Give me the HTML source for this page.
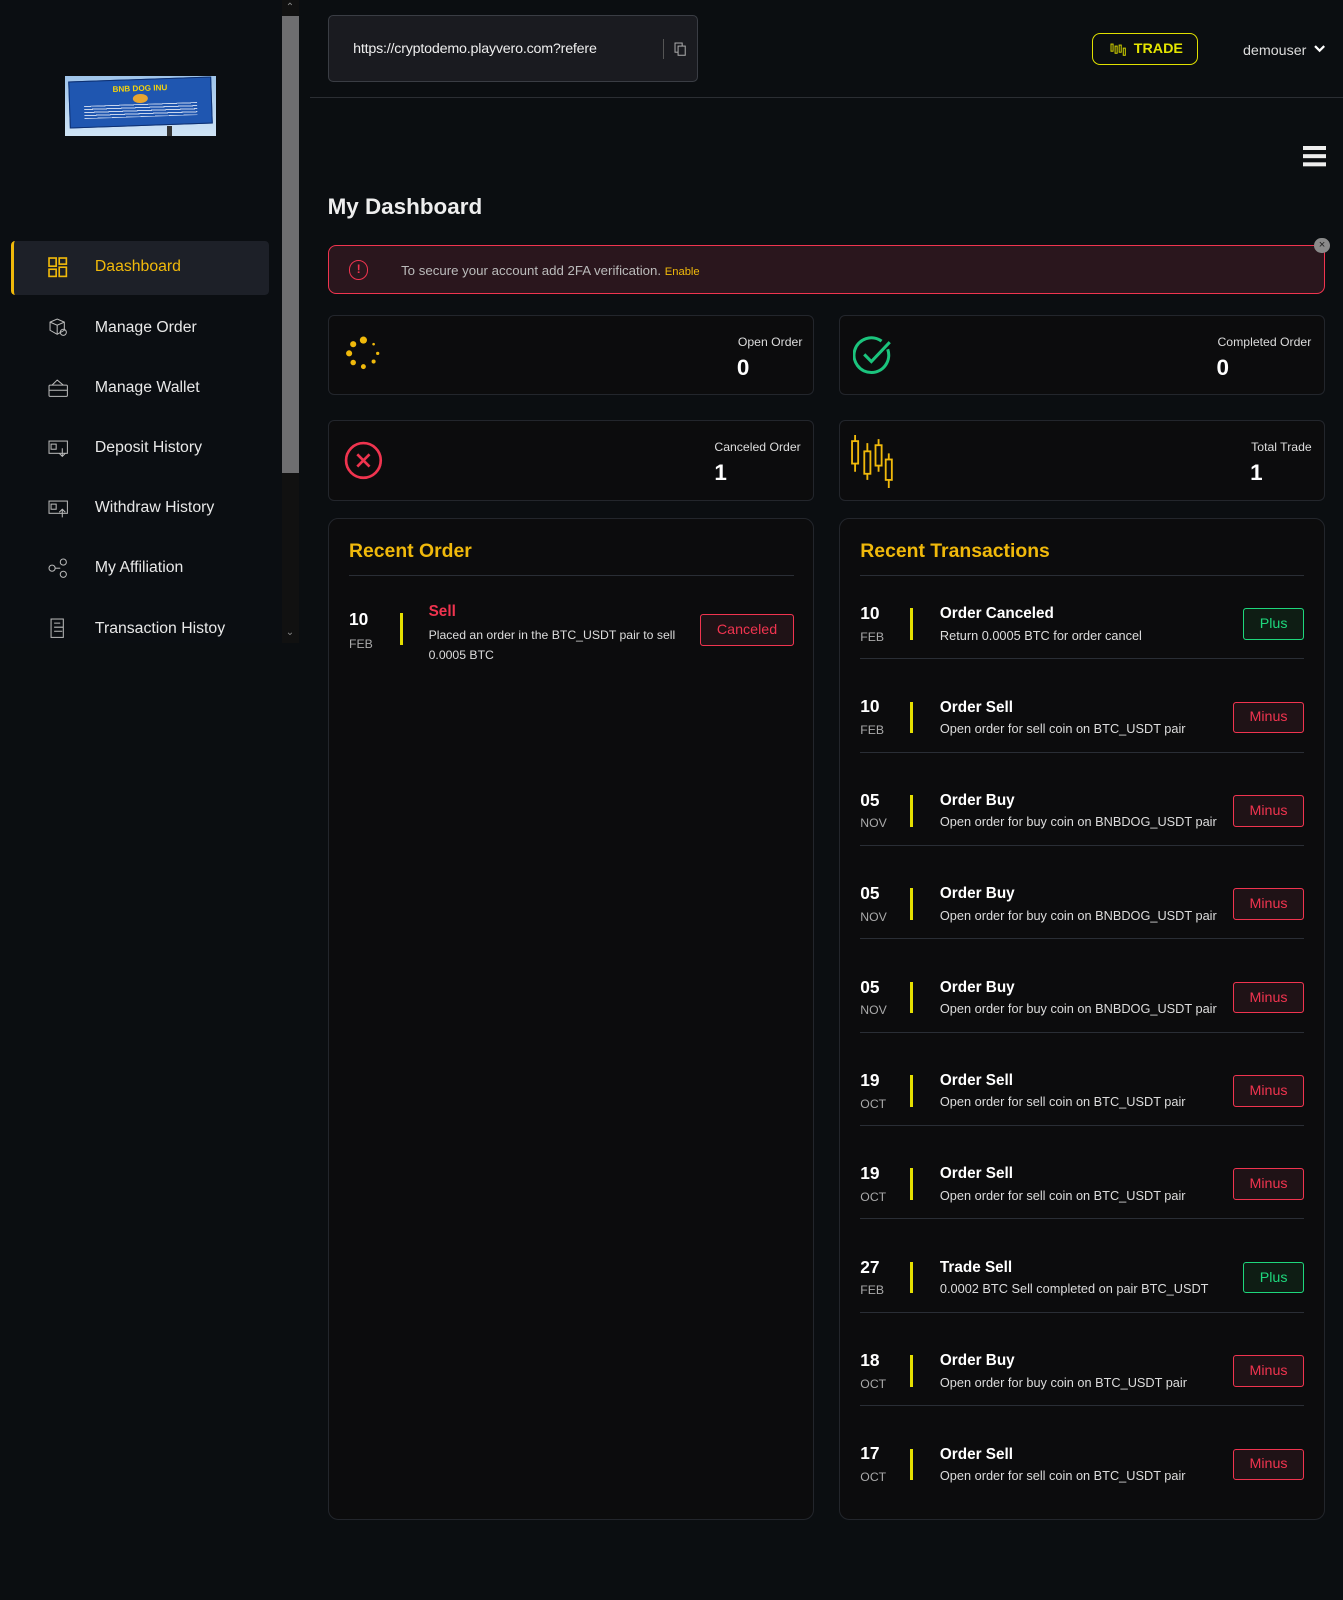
<!DOCTYPE html>
<html><head><meta charset="utf-8"><style>
*{margin:0;padding:0;box-sizing:border-box}
html,body{width:1343px;height:1600px;overflow:hidden;background:#0b0e11}
#r{zoom:1.02052;width:1316px;height:1568px;position:relative;font-family:"Liberation Sans",sans-serif;color:#fff;background:#0b0e11}
.a{position:absolute}
.side{left:0;top:0;width:276px;height:630px;background:#0b0e12}
.menu{left:47px;font-size:15.5px;color:#e8e8e8;display:flex;align-items:center}
.menu svg{width:20px;height:20px;margin-right:26px}
.card{background:#0c0c0d;border:1px solid #23262c;border-radius:6px}
.lbl{font-size:12px;color:#ddd}
.num{font-size:22px;font-weight:bold}
.date{font-size:17px;font-weight:bold}
.mon{font-size:12px;color:#aaa}
.bar{width:3px;background:#e5df00}
.tt{font-size:15px;font-weight:bold}
.ds{font-size:12.5px;color:#ddd}
.btn{font-size:14px;border-radius:3px;display:flex;align-items:center;justify-content:center}
.minus{border:1px solid #f0344f;color:#f0344f;background:#1f1216}
.plus{border:1px solid #1ed77c;color:#1ed77c;background:#0e1d14}
.hr{height:1px;background:#2a2e35}
</style></head><body><div id="r">
<div class="a side"></div>
<div class="a" style="left:276px;top:0;width:17px;height:630px;background:#111"></div>
<div class="a" style="left:276px;top:16px;width:17px;height:447px;background:#6e6e70"></div>
<div class="a" style="left:280px;top:2px;font-size:10px;color:#888">&#8963;</div>
<div class="a" style="left:280px;top:614px;font-size:10px;color:#888">&#8964;</div>
<!-- logo -->
<div class="a" style="left:64px;top:74px;width:148px;height:59px;background:linear-gradient(#9fc4ea,#cfe3f5);overflow:hidden">
 <div class="a" style="left:4px;top:3px;width:140px;height:46px;background:#1f56b0;transform:rotate(-2deg);font-size:8px;color:#f4d20c;font-weight:bold;text-align:center;padding-top:4px;border:1px solid #0d2f70">BNB DOG INU<div style="width:14px;height:9px;border-radius:50%;background:#e8a530;margin:1px auto"></div><div style="width:110px;height:12px;margin:1px auto;background:repeating-linear-gradient(#c8d6ee 0 1px,transparent 1px 3px)"></div></div>
 <div class="a" style="left:100px;top:49px;width:5px;height:11px;background:#333"></div>
</div>
<!-- active menu -->
<div class="a" style="left:11px;top:236px;width:253px;height:53px;background:#1d2028;border-left:3px solid #f0b90b;border-radius:4px"></div>
<div class="a menu" style="top:252px;color:#f0b90b"><svg viewBox="0 0 20 20" fill="none" stroke="#f0b90b" stroke-width="1.6"><rect x="1" y="1" width="7" height="8"/><rect x="1" y="12" width="7" height="7"/><rect x="11" y="1" width="7" height="6"/><rect x="11" y="10" width="7" height="9"/></svg>Daashboard</div>
<div class="a menu" style="top:311px"><svg viewBox="0 0 20 20" fill="none" stroke="#bbb" stroke-width="1"><path d="M2 5l7-3 7 3v8l-7 4-7-4z M2 5l7 3 7-3 M9 8v9"/><circle cx="15" cy="15" r="3"/></svg>Manage Order</div>
<div class="a menu" style="top:370px"><svg viewBox="0 0 20 20" fill="none" stroke="#bbb" stroke-width="1"><rect x="1" y="7" width="18" height="11" rx="1"/><path d="M4 7l5-5 6 5M1 12h18"/></svg>Manage Wallet</div>
<div class="a menu" style="top:429px"><svg viewBox="0 0 20 20" fill="none" stroke="#bbb" stroke-width="1"><rect x="1" y="3" width="18" height="12"/><rect x="3" y="6" width="5" height="5"/><path d="M14 10v8M11 15l3 3 3-3"/></svg>Deposit History</div>
<div class="a menu" style="top:488px"><svg viewBox="0 0 20 20" fill="none" stroke="#bbb" stroke-width="1"><rect x="1" y="3" width="18" height="12"/><rect x="3" y="6" width="5" height="5"/><path d="M14 19v-8M11 14l3-3 3 3"/></svg>Withdraw History</div>
<div class="a menu" style="top:547px"><svg viewBox="0 0 20 20" fill="none" stroke="#bbb" stroke-width="1"><circle cx="4" cy="10" r="3"/><circle cx="15" cy="4" r="3"/><circle cx="15" cy="16" r="3"/><path d="M7 10h5"/></svg>My Affiliation</div>
<div class="a menu" style="top:606px"><svg viewBox="0 0 20 20" fill="none" stroke="#bbb" stroke-width="1"><rect x="3" y="1" width="12" height="18"/><path d="M6 5h6M6 9h9M6 13h8"/></svg>Transaction Histoy</div>

<!-- header -->
<div class="a" style="left:321px;top:15px;width:363px;height:65px;background:#1a1b20;border:1px solid #3a3d44;border-radius:5px"></div>
<div class="a" style="left:346px;top:40px;font-size:14px;color:#eee;letter-spacing:-0.2px">https://cryptodemo.playvero.com?refere</div>
<div class="a" style="left:650px;top:38px;width:1px;height:20px;background:#555"></div>
<svg class="a" style="left:660px;top:41px" width="13" height="14" viewBox="0 0 13 14" fill="none" stroke="#aaa" stroke-width="1"><rect x="1" y="1" width="7" height="9"/><rect x="4" y="4" width="7" height="9" fill="#1a1b20"/></svg>
<div class="a" style="left:304px;top:95px;width:1012px;height:1px;background:#2b2e33"></div>
<div class="a" style="left:1070px;top:32px;width:104px;height:32px;border:1px solid #e0e000;border-radius:8px;color:#e5e500;font-weight:bold;font-size:14px;display:flex;align-items:center;padding-left:40px">TRADE</div>
<svg class="a" style="left:1088px;top:40px" width="16" height="16" viewBox="0 0 16 16" fill="none" stroke="#d0d000" stroke-width="1"><rect x="1" y="3" width="2" height="7"/><rect x="5" y="5" width="2" height="7"/><rect x="9" y="4" width="2" height="7"/><rect x="13" y="7" width="2" height="7"/></svg>
<div class="a" style="left:1218px;top:42px;font-size:14px;color:#ddd">demouser</div>
<svg class="a" style="left:1288px;top:44px" width="11" height="8" viewBox="0 0 11 8" fill="none" stroke="#fff" stroke-width="2.2"><path d="M1 1l4.5 4.5L10 1"/></svg>
<div class="a" style="left:1277px;top:143px;width:22px;height:4px;background:#eee;box-shadow:0 8px 0 #eee,0 16px 0 #eee"></div>
<div class="a" style="left:321px;top:190px;font-size:22px;font-weight:bold;color:#eee">My Dashboard</div>

<!-- alert -->
<div class="a" style="left:321px;top:240px;width:977px;height:48px;background:#2a161d;border:1px solid #f0344f;border-radius:8px"></div>
<div class="a" style="left:342px;top:255px;width:19px;height:19px;border:1.5px solid #f0344f;border-radius:50%;color:#f0344f;font-size:12px;font-weight:bold;text-align:center;line-height:16px">!</div>
<div class="a" style="left:393px;top:258px;font-size:13px;color:#bbb">To secure your account add 2FA verification. <span style="color:#f0b90b;font-size:11px">Enable</span></div>
<div class="a" style="left:1288px;top:233px;width:15px;height:15px;border-radius:50%;background:#8a8a8a;color:#222;font-size:11px;text-align:center;line-height:15px">×</div>

<!-- stat cards -->
<div class="a card" style="left:321px;top:309px;width:477px;height:78px"></div>
<div class="a card" style="left:822px;top:309px;width:476px;height:78px"></div>
<div class="a card" style="left:321px;top:412px;width:477px;height:79px"></div>
<div class="a card" style="left:822px;top:412px;width:476px;height:79px"></div>
<svg class="a" style="left:336px;top:328px" width="40" height="40" viewBox="0 0 40 40" fill="#f0b90b"><circle cx="20" cy="5" r="3.5"/><circle cx="10" cy="9" r="3"/><circle cx="6" cy="18" r="3"/><circle cx="10" cy="27" r="2.7"/><circle cx="20" cy="31" r="2.4"/><circle cx="30" cy="26" r="2"/><circle cx="34" cy="18" r="1.6"/><circle cx="30" cy="9" r="1.3"/></svg>
<div class="a lbl" style="left:723px;top:328px">Open Order</div><div class="a num" style="left:722px;top:348px">0</div>
<svg class="a" style="left:836px;top:328px" width="40" height="40" viewBox="0 0 40 40" fill="none" stroke="#1bc47d" stroke-width="3"><path d="M34 14A17 17 0 1 1 28 6"/><path d="M11 19l7 7 18-19"/></svg>
<div class="a lbl" style="left:1193px;top:328px">Completed Order</div><div class="a num" style="left:1192px;top:348px">0</div>
<svg class="a" style="left:336px;top:431px" width="40" height="40" viewBox="0 0 40 40" fill="none" stroke="#f0344f" stroke-width="2.6"><circle cx="20" cy="20" r="17"/><path d="M14 14l12 12M26 14l-12 12"/></svg>
<div class="a lbl" style="left:700px;top:431px">Canceled Order</div><div class="a num" style="left:700px;top:451px">1</div>
<svg class="a" style="left:833px;top:426px" width="46" height="52" viewBox="0 0 46 52" fill="none" stroke="#f0b90b" stroke-width="1.8"><path d="M5 0v36M17 8v36M28 4v32M38 18v34"/><rect x="2" y="6" width="6" height="22" fill="#0c0c0d"/><rect x="14" y="16" width="6" height="22" fill="#0c0c0d"/><rect x="25" y="10" width="6" height="20" fill="#0c0c0d"/><rect x="35" y="24" width="6" height="20" fill="#0c0c0d"/></svg>
<div class="a lbl" style="left:1226px;top:431px">Total Trade</div><div class="a num" style="left:1225px;top:451px">1</div>

<!-- recent order -->
<div class="a card" style="left:321px;top:508px;width:477px;height:981px;border-radius:10px"></div>
<div class="a" style="left:342px;top:529px;font-size:19px;font-weight:bold;color:#f0b90b">Recent Order</div>
<div class="a hr" style="left:342px;top:563px;width:436px"></div>
<div class="a date" style="left:342px;top:597px">10</div><div class="a mon" style="left:342px;top:624px">FEB</div>
<div class="a bar" style="left:392px;top:601px;height:31px"></div>
<div class="a" style="left:420px;top:591px;font-size:15px;font-weight:bold;color:#f0344f">Sell</div>
<div class="a ds" style="left:420px;top:612px;line-height:20px;font-size:12px">Placed an order in the BTC_USDT pair to sell<br>0.0005 BTC</div>
<div class="a btn minus" style="left:686px;top:602px;width:92px;height:31px">Canceled</div>

<!-- recent transactions -->
<div class="a card" style="left:822px;top:508px;width:476px;height:981px;border-radius:10px"></div>
<div class="a" style="left:843px;top:529px;font-size:19px;font-weight:bold;color:#f0b90b">Recent Transactions</div>
<div class="a hr" style="left:843px;top:563px;width:435px"></div>

<div class="a" style="left:843px;top:580px;width:435px">
<div style="position:relative;height:91.5px"><div class="a date" style="left:0;top:11px">10</div><div class="a mon" style="left:0;top:37px">FEB</div><div class="a bar" style="left:49px;top:16px;height:31px"></div><div class="a tt" style="left:78px;top:13px">Order Canceled</div><div class="a ds" style="left:78px;top:35px">Return 0.0005 BTC for order cancel</div><div class="a btn plus" style="left:375px;top:16px;width:60px;height:31px">Plus</div><div class="a hr" style="left:0;top:65px;width:435px"></div></div>
<div style="position:relative;height:91.5px"><div class="a date" style="left:0;top:11px">10</div><div class="a mon" style="left:0;top:37px">FEB</div><div class="a bar" style="left:49px;top:16px;height:31px"></div><div class="a tt" style="left:78px;top:13px">Order Sell</div><div class="a ds" style="left:78px;top:35px">Open order for sell coin on BTC_USDT pair</div><div class="a btn minus" style="left:365px;top:16px;width:70px;height:31px">Minus</div><div class="a hr" style="left:0;top:65px;width:435px"></div></div>
<div style="position:relative;height:91.5px"><div class="a date" style="left:0;top:11px">05</div><div class="a mon" style="left:0;top:37px">NOV</div><div class="a bar" style="left:49px;top:16px;height:31px"></div><div class="a tt" style="left:78px;top:13px">Order Buy</div><div class="a ds" style="left:78px;top:35px">Open order for buy coin on BNBDOG_USDT pair</div><div class="a btn minus" style="left:365px;top:16px;width:70px;height:31px">Minus</div><div class="a hr" style="left:0;top:65px;width:435px"></div></div>
<div style="position:relative;height:91.5px"><div class="a date" style="left:0;top:11px">05</div><div class="a mon" style="left:0;top:37px">NOV</div><div class="a bar" style="left:49px;top:16px;height:31px"></div><div class="a tt" style="left:78px;top:13px">Order Buy</div><div class="a ds" style="left:78px;top:35px">Open order for buy coin on BNBDOG_USDT pair</div><div class="a btn minus" style="left:365px;top:16px;width:70px;height:31px">Minus</div><div class="a hr" style="left:0;top:65px;width:435px"></div></div>
<div style="position:relative;height:91.5px"><div class="a date" style="left:0;top:11px">05</div><div class="a mon" style="left:0;top:37px">NOV</div><div class="a bar" style="left:49px;top:16px;height:31px"></div><div class="a tt" style="left:78px;top:13px">Order Buy</div><div class="a ds" style="left:78px;top:35px">Open order for buy coin on BNBDOG_USDT pair</div><div class="a btn minus" style="left:365px;top:16px;width:70px;height:31px">Minus</div><div class="a hr" style="left:0;top:65px;width:435px"></div></div>
<div style="position:relative;height:91.5px"><div class="a date" style="left:0;top:11px">19</div><div class="a mon" style="left:0;top:37px">OCT</div><div class="a bar" style="left:49px;top:16px;height:31px"></div><div class="a tt" style="left:78px;top:13px">Order Sell</div><div class="a ds" style="left:78px;top:35px">Open order for sell coin on BTC_USDT pair</div><div class="a btn minus" style="left:365px;top:16px;width:70px;height:31px">Minus</div><div class="a hr" style="left:0;top:65px;width:435px"></div></div>
<div style="position:relative;height:91.5px"><div class="a date" style="left:0;top:11px">19</div><div class="a mon" style="left:0;top:37px">OCT</div><div class="a bar" style="left:49px;top:16px;height:31px"></div><div class="a tt" style="left:78px;top:13px">Order Sell</div><div class="a ds" style="left:78px;top:35px">Open order for sell coin on BTC_USDT pair</div><div class="a btn minus" style="left:365px;top:16px;width:70px;height:31px">Minus</div><div class="a hr" style="left:0;top:65px;width:435px"></div></div>
<div style="position:relative;height:91.5px"><div class="a date" style="left:0;top:11px">27</div><div class="a mon" style="left:0;top:37px">FEB</div><div class="a bar" style="left:49px;top:16px;height:31px"></div><div class="a tt" style="left:78px;top:13px">Trade Sell</div><div class="a ds" style="left:78px;top:35px">0.0002 BTC Sell completed on pair BTC_USDT</div><div class="a btn plus" style="left:375px;top:16px;width:60px;height:31px">Plus</div><div class="a hr" style="left:0;top:65px;width:435px"></div></div>
<div style="position:relative;height:91.5px"><div class="a date" style="left:0;top:11px">18</div><div class="a mon" style="left:0;top:37px">OCT</div><div class="a bar" style="left:49px;top:16px;height:31px"></div><div class="a tt" style="left:78px;top:13px">Order Buy</div><div class="a ds" style="left:78px;top:35px">Open order for buy coin on BTC_USDT pair</div><div class="a btn minus" style="left:365px;top:16px;width:70px;height:31px">Minus</div><div class="a hr" style="left:0;top:65px;width:435px"></div></div>
<div style="position:relative;height:91.5px"><div class="a date" style="left:0;top:11px">17</div><div class="a mon" style="left:0;top:37px">OCT</div><div class="a bar" style="left:49px;top:16px;height:31px"></div><div class="a tt" style="left:78px;top:13px">Order Sell</div><div class="a ds" style="left:78px;top:35px">Open order for sell coin on BTC_USDT pair</div><div class="a btn minus" style="left:365px;top:16px;width:70px;height:31px">Minus</div></div>
</div>
</div></body></html>
